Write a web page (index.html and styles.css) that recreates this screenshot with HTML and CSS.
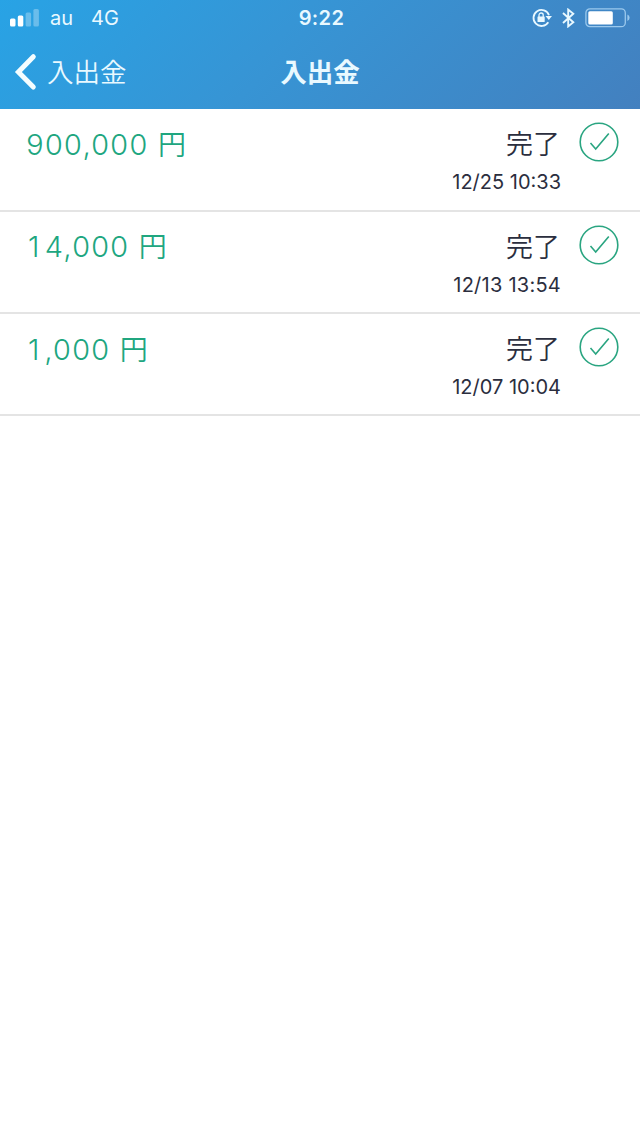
FILE: index.html
```html
<!DOCTYPE html>
<html lang="ja">
<head>
<meta charset="utf-8">
<title>入出金</title>
<link rel="stylesheet" href="styles.css">
</head>
<body>
<svg class="defs" width="0" height="0">
  <symbol id="check" viewBox="0 0 40 40">
    <circle cx="20" cy="20" r="18.8"/>
    <path d="M11.5 21 L16.7 27 L29.8 11.5"/>
  </symbol>
</svg>
<header class="header">
  <div class="status">
    <div class="status-left">
      <svg class="signal" width="29" height="18" viewBox="0 0 29 18" fill="#fff">
        <rect x="0" y="9.5" width="5.5" height="8" rx="1.5"/>
        <rect x="7.8" y="6.5" width="5.5" height="11" rx="1.5"/>
        <rect x="15.6" y="3.5" width="5.5" height="14" rx="1.5" opacity=".3"/>
        <rect x="23.4" y="0" width="5.5" height="17.5" rx="1.5" opacity=".3"/>
      </svg>
      <span class="carrier">au</span>
      <span class="network">4G</span>
    </div>
    <span class="clock">9:22</span>
    <div class="status-right">
      <svg class="lock" width="20" height="20" viewBox="0 0 20 20">
        <path d="M16.3 14.2 A8 8 0 1 1 17 7.2" fill="none" stroke="#e8f8ff" stroke-width="1.8"/>
        <path d="M13.5 8 H20 L16.8 12 Z" fill="#e8f8ff"/>
        <rect x="5.5" y="8.4" width="7.2" height="5.6" rx=".6" fill="#e8f8ff"/>
        <path d="M7 9 V7.1 A2.1 2.1 0 0 1 11.2 7.1 V9" fill="none" stroke="#e8f8ff" stroke-width="1.3"/>
      </svg>
      <svg class="bluetooth" width="13" height="20" viewBox="0 0 13 20" fill="none" stroke="#e8f8ff" stroke-width="1.9">
        <path d="M1 5 L11.3 14.2 L6.2 18.4 V1.6 L11.3 5.8 L1 15"/>
      </svg>
      <svg class="battery" width="46" height="20" viewBox="0 0 46 20">
        <rect x=".9" y=".9" width="39.4" height="17.8" rx="4" fill="none" stroke="#9bc9ed" stroke-width="1.3"/>
        <rect x="3.3" y="3.2" width="24.5" height="13.2" rx="1.5" fill="#fff"/>
        <path d="M42.4 6.6 Q44.6 7.5 44.6 9.8 T42.4 13 Z" fill="#9bc9ed"/>
      </svg>
    </div>
  </div>
  <nav class="nav">
    <div class="back">
      <svg width="24" height="38" viewBox="0 0 24 38" fill="none" stroke="#f4fdff" stroke-width="5" stroke-linecap="round" stroke-linejoin="miter">
        <path d="M19.3 3.7 L4.4 19 L19.3 34"/>
      </svg>
      <span class="back-label">入出金</span>
    </div>
    <h1 class="title">入出金</h1>
  </nav>
</header>
<main class="list">
  <section class="row">
    <div class="amount"><span class="digits">900,000</span><span class="unit">円</span></div>
    <div class="state"><span class="label">完了</span><time class="date">12/25 10:33</time></div>
    <svg class="check"><use href="#check"/></svg>
  </section>
  <section class="row">
    <div class="amount"><span class="digits"><span class="one">1</span>4,000</span><span class="unit">円</span></div>
    <div class="state"><span class="label">完了</span><time class="date date-loose">12/13 13:54</time></div>
    <svg class="check"><use href="#check"/></svg>
  </section>
  <section class="row">
    <div class="amount"><span class="digits"><span class="one">1</span>,000</span><span class="unit">円</span></div>
    <div class="state"><span class="label">完了</span><time class="date">12/07 10:04</time></div>
    <svg class="check"><use href="#check"/></svg>
  </section>
</main>
</body>
</html>
```

FILE: styles.css
```css
* { box-sizing: border-box; }
body {
  margin: 0;
  min-height: 1138px;
  background: #fff;
  font-family: Inter, "Noto Sans CJK JP", sans-serif;
  color: #2b2e3e;
}
.defs { position: absolute; }
.header {
  height: 109px;
  background: linear-gradient(135deg, #28a3e5 0%, #3794d4 45%, #4380bf 100%);
  color: #e9f9ff;
}
.status {
  display: grid;
  grid-template-columns: 1fr auto 1fr;
  height: 35px;
  padding: 0 9px 0 10px;
  align-items: center;
  font-size: 20px;
  line-height: 24px;
}
.status-left, .status-right { display: flex; align-items: center; }
.status-right { justify-content: flex-end; }
.carrier { margin-left: 11px; }
.network { margin-left: 18px; }
.clock { padding-left: 2px; font-weight: 600; letter-spacing: .4px; }
.bluetooth { margin: 0 10px 0 10px; }
.nav {
  display: grid;
  grid-template-columns: 1fr auto 1fr;
  height: 74px;
  padding: 0 14px 0 14px;
  align-items: center;
}
.nav::after { content: ""; }
.back { display: flex; align-items: center; }
.back svg { display: block; }
.back-label {
  margin-left: 9px;
  font-size: 26.5px;
  line-height: 38px;
  font-weight: 350;
}
.title {
  margin: 0;
  font-size: 26.5px;
  line-height: 38px;
  font-weight: 700;
}
.list { padding-top: .4px; }
.row {
  display: flex;
  height: 102.3px;
  padding: 0 21px 0 25.5px;
  border-bottom: 2px solid #e4e4e4;
  align-items: flex-start;
}
.amount {
  display: flex;
  flex: 1;
  padding-top: 15.7px;
  color: #20a67f;
  font-weight: 350;
  line-height: 40px;
}
.digits {
  font-size: 29px;
  font-variant-numeric: tabular-nums;
  letter-spacing: .3px;
}
.one {
  display: inline-block;
  width: 19px;
  padding-left: 2.5px;
  font-variant-numeric: normal;
}
.unit { margin-left: 10px; font-size: 28px; }
.state {
  display: flex;
  flex-direction: column;
  align-items: flex-end;
  padding-top: 16px;
}
.label { margin-right: 1px; font-size: 27px; line-height: 40px; font-weight: 350; }
.date { font-size: 20px; line-height: 35px; }
.date-loose { letter-spacing: .25px; }
.check {
  width: 40px;
  height: 40px;
  margin: 13px 0 0 18px;
  fill: none;
  stroke: #2aa581;
  stroke-width: 1.6;
}
```
